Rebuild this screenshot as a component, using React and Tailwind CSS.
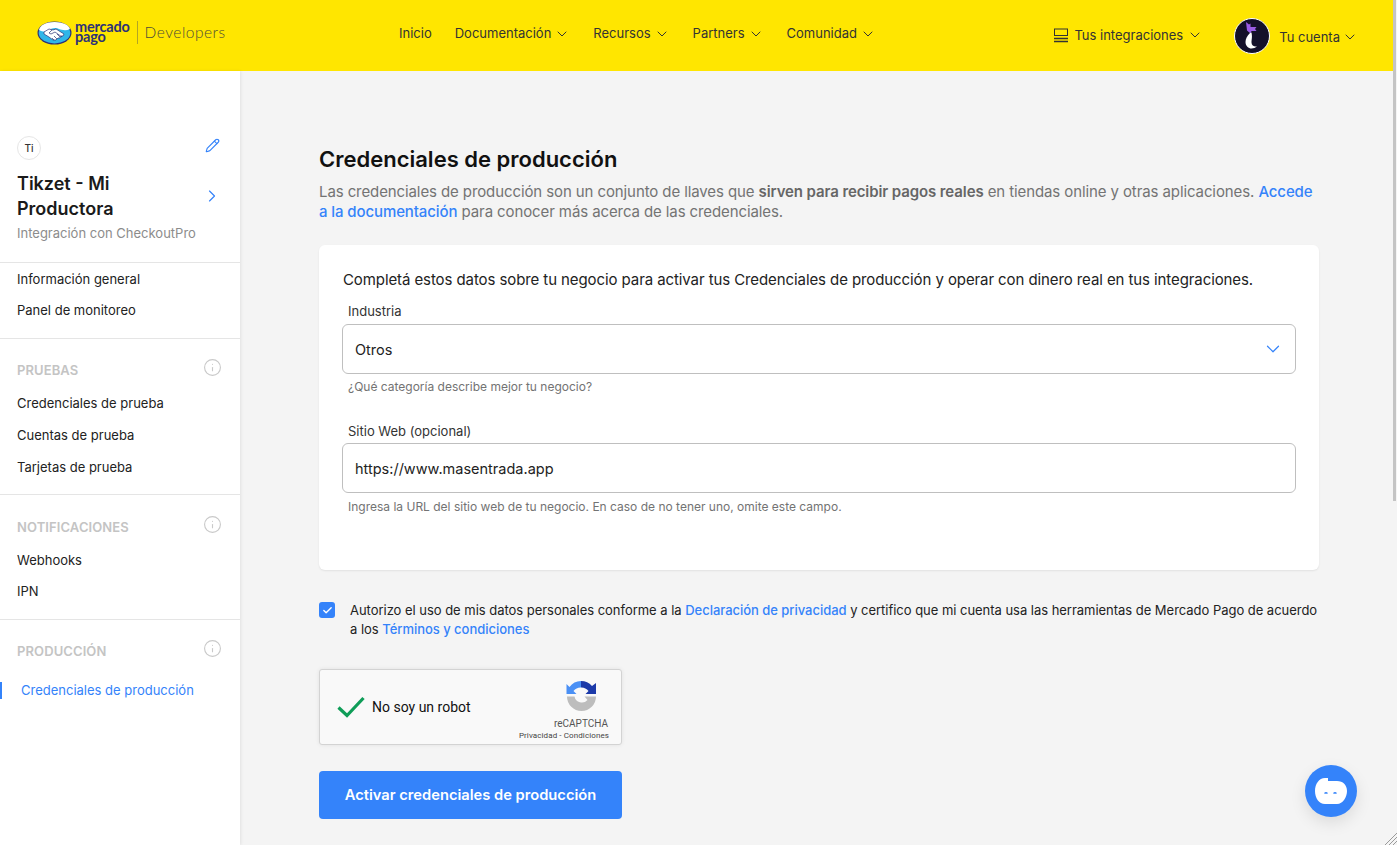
import { ChevronDown, ChevronRight, Pencil, Info, Check } from "lucide-react";

const NavItem = ({ label, arrow = true }) => (
  <div className="flex items-center gap-[3px] text-[13px] text-[#333]">
    <span>{label}</span>
    {arrow && <ChevronDown className="w-[16px] h-[16px]" strokeWidth={1.5} />}
  </div>
);

const SideLink = ({ label, tight }) => (
  <div className={`${tight ? "h-[31px]" : "h-[32px]"} pl-[17px] flex items-center text-[13px] text-[#222]`}>{label}</div>
);

const SideTitle = ({ label }) => (
  <div className="flex items-start justify-between pl-[17px] pr-[18px] h-[28px] mb-[5px]">
    <span className="text-[13px] leading-[18px] font-semibold tracking-[0.1px] text-[#c4c4c4] mt-[6px]">{label}</span>
    <Info className="w-[19px] h-[19px] text-[#c9c9c9] mt-[3px]" strokeWidth={1.4} />
  </div>
);

const Logo = () => (
  <div className="flex items-center">
    <svg width="35" height="24" viewBox="0 0 35 24">
      <ellipse cx="17.5" cy="12" rx="17" ry="11.5" fill="#2d3277" />
      <ellipse cx="17.5" cy="12" rx="15.8" ry="10.4" fill="#30b6e8" />
      <path d="M2 9c4 2 7 2 10 0 3-2 7-3 10-1 3 1 7 2 11 0-1-4-7-7-15.5-7S3 4 2 9z" fill="#fff" />
      <path d="M7 11l5-3 4 1 3-1 8 5-1 2-2 0-1 2-2 0-2 2-3 0-4-3-5-3z" fill="#fff" stroke="#2d3277" strokeWidth="0.7" />
      <path d="M15 9l-3 3 2 1 4-2 7 5M17 19l-2-2M20 18l-3-3M23 16l-3-3" fill="none" stroke="#2d3277" strokeWidth="0.7" />
    </svg>
    <div className="ml-[3px] text-[14.5px] leading-[10.5px] font-bold text-[#2d3277] tracking-[-0.2px] pb-[1px] font-['Lato',sans-serif]">
      <div>mercado</div>
      <div>pago</div>
    </div>
    <div className="w-px h-[23px] bg-[#b3a524] ml-[7px]" />
    <span className="ml-[7px] text-[15.5px] text-[#4d4b38] tracking-[0.5px] font-light font-['Lato',sans-serif]">Developers</span>
  </div>
);

const Field = ({ label, value, hint, select, second }) => (
  <div>
    <div className="pl-[6px] text-[13px] leading-[18px] text-[#333]">{label}</div>
    <div className={`${second ? "mt-[3px]" : "mt-[4px]"} h-[50px] border border-[#bfbfbf] rounded-[6px] bg-white pl-[12px] pr-[11px] flex items-center justify-between text-[14.5px] text-[#222]`}>
      <span className="pt-[2px]">{value}</span>
      {select && <ChevronDown className="w-[22px] h-[22px] text-[#3483fa]" strokeWidth={1.3} />}
    </div>
    <div className={`pl-[6px] ${second ? "mt-[6px]" : "mt-[5px]"} text-[12px] leading-[16px] text-[#737373]`}>{hint}</div>
  </div>
);

export default function App() {
  return (
    <div className="relative h-[845px] w-full overflow-hidden flex flex-col bg-[#f4f4f4] font-['Inter',sans-serif]">
      <header className="h-[71px] shrink-0 bg-[#ffe600] flex items-center pl-[37px] pr-[39px]">
        <div className="w-[362px] -mt-[6px]"><Logo /></div>
        <nav className="flex items-center gap-[23px] -mt-[4px]">
          <NavItem label="Inicio" arrow={false} />
          <NavItem label="Documentación" />
          <NavItem label="Recursos" />
          <NavItem label="Partners" />
          <NavItem label="Comunidad" />
        </nav>
        <div className="ml-auto flex items-center gap-[6px] text-[13px] text-[#333]">
          <svg width="14" height="15" viewBox="0 0 14 15" fill="none" stroke="#333">
            <rect x="0.5" y="1" width="13" height="6.5" strokeWidth="1" />
            <path d="M0 10.5h14M0 13.5h14" strokeWidth="1.5" />
          </svg>
          <span>Tus integraciones</span>
          <ChevronDown className="w-[16px] h-[16px] -ml-[2px] -mt-[1px]" strokeWidth={1.5} />
        </div>
        <div className="ml-[31px] flex items-center text-[13px] text-[#333]">
          <svg width="36" height="36" viewBox="0 0 36 36">
            <circle cx="18" cy="18" r="17.5" fill="#14102a" stroke="#fff" strokeWidth="1" />
            <path d="M12 4l3 2.500 1.500-1v3.500l6 0-1.500 2 1.500 2h-5l-1 2.500-3.500-3z" fill="#9b5de5" />
            <path d="M16 15c-3 3-4.500 6-4.500 9 0 4 3 6.500 6 6.500 2 0 4-.7 5.500-2-3 .5-5.500-1-5.500-4 0-3 1-5 0-10z" fill="#fff" />
          </svg>
          <span className="ml-[9px] mt-[4px]">Tu cuenta</span>
          <ChevronDown className="w-[16px] h-[16px] ml-[2px] mt-[2px]" strokeWidth={1.5} />
        </div>
      </header>

      <div className="flex flex-1 min-h-0">
        <aside className="w-[240px] shrink-0 bg-white shadow-[1px_0_3px_rgba(0,0,0,0.08)]">
          <div className="pt-[65px] pl-[17px] pr-[20px] h-[192px] border-b border-[#e5e5e5]">
            <div className="flex items-start justify-between">
              <div className="w-[24px] h-[24px] rounded-full border border-[#e6e6e6] flex items-center justify-center text-[10px] font-medium text-[#333]">Ti</div>
              <Pencil className="w-[15px] h-[15px] text-[#3483fa] mt-[2px]" strokeWidth={1.8} />
            </div>
            <div className="mt-[11px] flex items-center justify-between">
              <div className="text-[18px] leading-[25px] font-semibold text-[#1a1a1a] w-[130px]">Tikzet - Mi Productora</div>
              <ChevronRight className="w-[20px] h-[20px] text-[#3483fa] -mr-[2px] -mt-[1px]" strokeWidth={1.4} />
            </div>
            <div className="mt-[3px] text-[13px] leading-[18px] text-[#8c8c8c]">Integración con CheckoutPro</div>
          </div>
          <div className="h-[76px] pt-[1px] border-b border-[#e5e5e5]">
            <SideLink tight label="Información general" />
            <SideLink tight label="Panel de monitoreo" />
          </div>
          <div className="h-[156px] pt-[16px] border-b border-[#e5e5e5]">
            <SideTitle label="PRUEBAS" />
            <SideLink label="Credenciales de prueba" />
            <SideLink label="Cuentas de prueba" />
            <SideLink label="Tarjetas de prueba" />
          </div>
          <div className="h-[125px] pt-[17px] border-b border-[#e5e5e5]">
            <SideTitle label="NOTIFICACIONES" />
            <SideLink tight label="Webhooks" />
            <SideLink tight label="IPN" />
          </div>
          <div className="pt-[16px]">
            <SideTitle label="PRODUCCIÓN" />
            <div className="mt-[18px] h-[17px] border-l-2 border-[#3483fa] pl-[19px] flex items-center text-[13px] text-[#3483fa]">Credenciales de producción</div>
          </div>
        </aside>

        <main className="flex-1 pl-[79px] pt-[74px]">
          <div className="w-[1000px]">
            <h1 className="text-[22px] leading-[28px] font-semibold text-[#111]">Credenciales de producción</h1>
            <p className="mt-[9px] text-[15px] leading-[20px] tracking-[-0.1px] text-[#737373]">
              Las credenciales de producción son un conjunto de llaves que <b className="font-semibold text-[#666]">sirven para recibir pagos reales</b> en tiendas online y otras aplicaciones. <span className="font-medium text-[#3483fa]">Accede a la documentación</span> para conocer más acerca de las credenciales.
            </p>
            <section className="mt-[23px] h-[325px] bg-white rounded-[6px] shadow-[0_1px_2px_rgba(0,0,0,0.08)] pt-[24px] pl-[23px] pr-[23px]">
              <p className="pl-[1px] text-[15px] leading-[22px] tracking-[-0.09px] text-[#222]">Completá estos datos sobre tu negocio para activar tus Credenciales de producción y operar con dinero real en tus integraciones.</p>
              <div className="mt-[11px] flex flex-col gap-[27px]">
                <Field label="Industria" value="Otros" select hint="¿Qué categoría describe mejor tu negocio?" />
                <Field second label="Sitio Web (opcional)" value="https://www.masentrada.app" hint="Ingresa la URL del sitio web de tu negocio. En caso de no tener uno, omite este campo." />
              </div>
            </section>
            <div className="mt-[31px] flex items-start gap-[15px]">
              <div className="w-[16px] h-[16px] mt-[1px] shrink-0 rounded-[3px] bg-[#3483fa] flex items-center justify-center">
                <Check className="w-[11px] h-[11px] text-white" strokeWidth={3} />
              </div>
              <p className="text-[13px] leading-[19px] tracking-[-0.03px] text-[#222]">
                Autorizo el uso de mis datos personales conforme a la <span className="font-medium text-[#3483fa]">Declaración de privacidad</span> y certifico que mi cuenta usa las herramientas de Mercado Pago de acuerdo a los <span className="font-medium text-[#3483fa]">Términos y condiciones</span>
              </p>
            </div>
            <div className="mt-[30px] w-[303px] h-[76px] bg-[#f9f9f9] border border-[#d3d3d3] rounded-[3px] shadow-[0_0_4px_rgba(0,0,0,0.08)] flex items-center pl-[17px] pr-[13px] font-['Roboto',sans-serif]">
              <svg width="28" height="22" viewBox="0 0 28 22" fill="none">
                <path d="M1.5 11.5l8.500 8L26.500 2" stroke="#0f9d58" strokeWidth="3.2" />
              </svg>
              <span className="ml-[7px] text-[14px] text-[#111]">No soy un robot</span>
              <div className="ml-auto flex flex-col items-end pt-[6px]">
                <svg className="mr-[11px]" width="31" height="31" viewBox="0 0 31 31">
                  <path d="M15 1A14.500 14.500 0 0 0 3.500 7L.5 4v10h10L7.500 11A9 9 0 0 1 15 7.500z" fill="#4a90f5" />
                  <path d="M15 1a14.500 14.500 0 0 1 11 5l4-3v11H19.500l3-3A9 9 0 0 0 15 7.500z" fill="#1c3aa9" />
                  <path d="M1 16.500h7.500a7.500 7.500 0 0 0 13 3.500l-3-3.500h11.500A14.500 14.500 0 0 1 1 16.500z" fill="#bdbdbd" />
                </svg>
                <span className="text-[10px] leading-[12px] text-[#555] mt-[7px]">reCAPTCHA</span>
                <span className="text-[8px] leading-[11px] tracking-[0.1px] text-[#444] -mr-[1px]">Privacidad - Condiciones</span>
              </div>
            </div>
            <button className="mt-[26px] pt-[1px] w-[303px] h-[48px] rounded-[4px] bg-[#3483fa] text-white text-[14.7px] font-semibold">Activar credenciales de producción</button>
          </div>
        </main>
      </div>

      <div className="absolute left-[1305px] top-[765px] w-[52px] h-[52px] rounded-full bg-[#3483fa] shadow-[0_6px_16px_rgba(0,0,0,0.1)] flex items-center justify-center">
        <svg width="32" height="26" viewBox="0 0 32 26">
          <path d="M10 0h3v3h9c6 0 10 4 10 10s-4 13-10 13H10C4 26 0 20 0 13S4 0 10 0z" fill="#fff" />
          <path d="M9.500 15.500q1.500-1.500 3 0M18.500 15.500q1.500-1.500 3 0" stroke="#3483fa" strokeWidth="1.2" fill="none" />
        </svg>
      </div>
      <div className="absolute right-0 top-0 w-[4px] h-full bg-[#f4f4f4]">
        <div className="w-[3px] h-[501px] bg-[#c4c4c4]" />
      </div>
      <svg className="absolute right-0 bottom-0" width="12" height="12" viewBox="0 0 12 12" stroke="#9a9a9a" strokeWidth="1">
        <path d="M12 0L0 12M12 4L4 12M12 8L8 12" />
      </svg>
    </div>
  );
}
